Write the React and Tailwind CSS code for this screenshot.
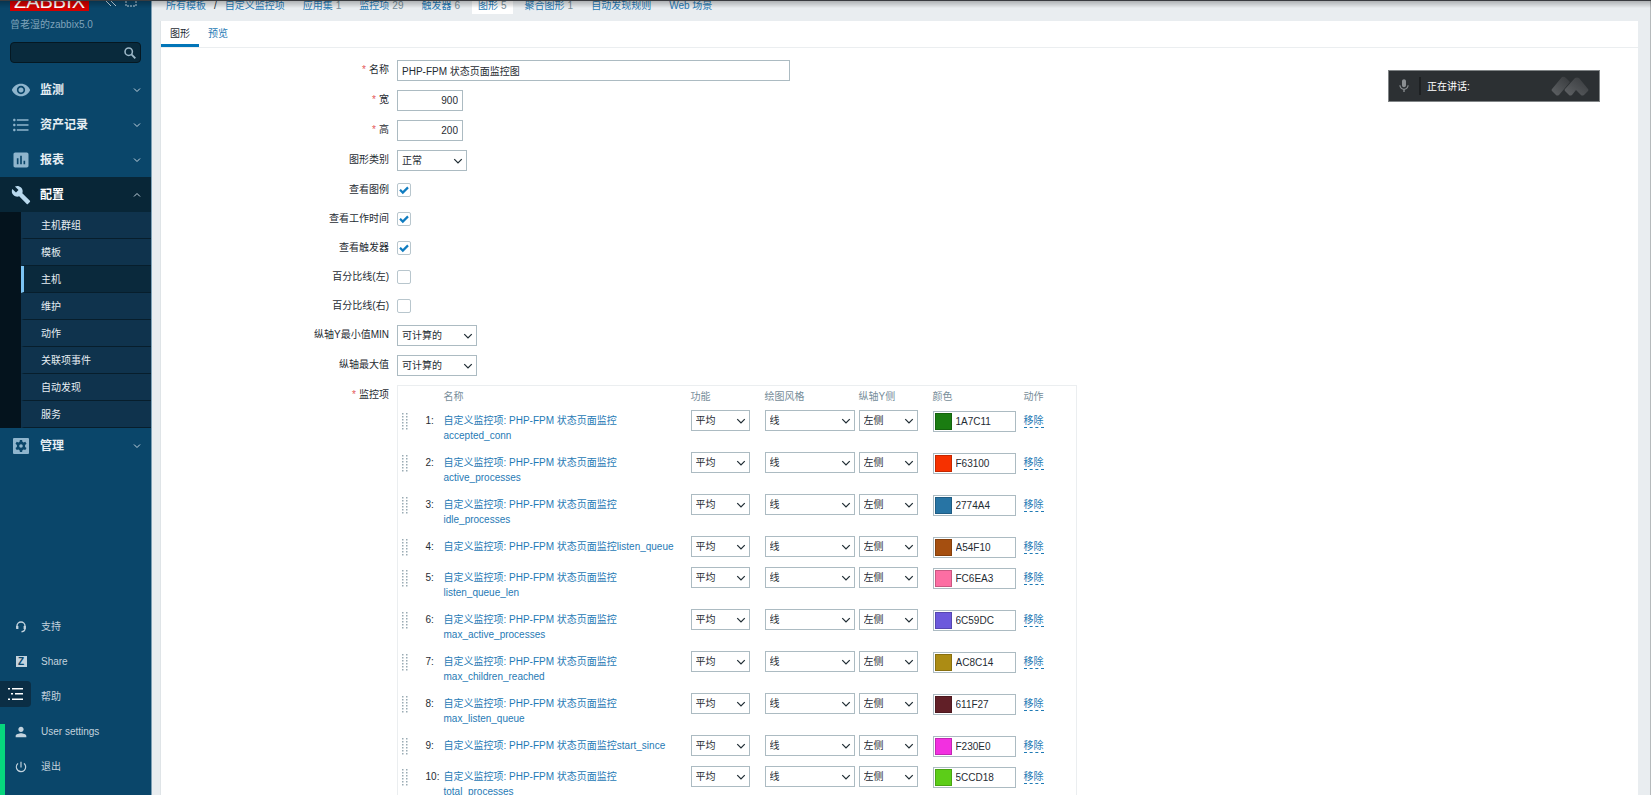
import React, { useState } from 'react';
import { MdVisibility, MdFormatListBulleted, MdAssessment, MdBuild, MdPerson, MdPowerSettingsNew, MdMic } from 'react-icons/md';

const menuTop = [
    { label: '监测', icon: MdVisibility },
    { label: '资产记录', icon: MdFormatListBulleted },
    { label: '报表', icon: MdAssessment },
];

const subMenu = ['主机群组', '模板', '主机', '维护', '动作', '关联项事件', '自动发现', '服务'];

const graphItems = [
    { name: 'accepted_conn', color: '1A7C11' },
    { name: 'active_processes', color: 'F63100' },
    { name: 'idle_processes', color: '2774A4' },
    { name: 'listen_queue', color: 'A54F10' },
    { name: 'listen_queue_len', color: 'FC6EA3' },
    { name: 'max_active_processes', color: '6C59DC' },
    { name: 'max_children_reached', color: 'AC8C14' },
    { name: 'max_listen_queue', color: '611F27' },
    { name: 'start_since', color: 'F230E0' },
    { name: 'total_processes', color: '5CCD18' },
];

const Chevron = ({ up, className }) => (
    <svg viewBox="0 0 8 8" className={className} fill="none" stroke="currentColor">
        <path d={up ? 'M1 5.500 4 2.500l3 3' : 'M1 2.500 4 5.500l3-3'} />
    </svg>
);

const GearIcon = ({ className }) => (
    <svg viewBox="0 0 16 16" className={className} fill="currentColor">
        <path
            fillRule="evenodd"
            d="M1 0h14a1 1 0 0 1 1 1v14a1 1 0 0 1-1 1H1a1 1 0 0 1-1-1V1a1 1 0 0 1 1-1zm5.9 2-.3 1.7-1.2.7-1.7-.6-1.2 2 1.4 1.2v1.9l-1.4 1.2 1.2 2 1.7-.6 1.2.7.3 1.8h2.2l.3-1.8 1.2-.7 1.7.6 1.2-2-1.4-1.2V7l1.4-1.2-1.2-2-1.7.6-1.2-.7L9.100 2zM8 6.200a1.800 1.800 0 1 1 0 3.600 1.800 1.800 0 0 1 0-3.600z"
        />
    </svg>
);

const HeadsetIcon = () => (
    <svg viewBox="0 0 12 12" className="size-3" fill="none" stroke="currentColor" strokeWidth="1.400">
        <path d="M2 7.500V5a4 4 0 0 1 8 0v2.500" />
        <path d="M2.300 5v3M9.700 5v3" strokeWidth="2.200" />
        <path d="M10 7.500c0 2-1 3-3.500 3.300" />
    </svg>
);

const ShareIcon = () => (
    <span className="flex size-[11px] items-center justify-center bg-[#c3d3de]">
        <span className="text-[10px] font-bold leading-none text-[#0a466a]">Z</span>
    </span>
);

const footerMenu = [
    { label: '支持', icon: <HeadsetIcon /> },
    { label: 'Share', icon: <ShareIcon /> },
    { label: '帮助', icon: null },
    { label: 'User settings', icon: <MdPerson className="size-4" /> },
    { label: '退出', icon: <MdPowerSettingsNew className="size-[14px]" /> },
];

const MenuRow = ({ label, icon: Icon, active }) => (
    <a
        href="#"
        className={`flex h-[35px] items-center pl-[11px] pr-2.5 text-xs font-bold ${active ? 'bg-[#082637] text-white' : 'text-[#e6eef3]'}`}
    >
        <span className={`mr-[9px] flex w-5 justify-center ${active ? 'text-[#b9d9ee]' : 'text-[#8fb5cd]'}`}>
            <Icon className={Icon === GearIcon ? 'size-4' : 'size-5'} />
        </span>
        <span className="flex-1">{label}</span>
        <Chevron up={active} className="size-2 text-[#c3d3de]" />
    </a>
);

const Sidebar = () => (
    <aside className="flex w-[152px] shrink-0 flex-col overflow-hidden border-r border-[#7ea0b5] bg-[#0a466a] text-[#c3d3de]">
        <div className="flex h-[11px] items-end px-2.5">
            <a href="#" className="w-[79px] bg-[#d40000] text-center text-xl leading-5 text-white">ZABBIX</a>
            <svg viewBox="0 0 12 12" className="mb-1 ml-4 size-3" fill="none" stroke="currentColor">
                <path d="M6 1 1 6l5 5M11 1 6 6l5 5" />
            </svg>
            <svg viewBox="0 0 12 12" className="mb-1 ml-2 size-3" fill="none" stroke="currentColor" strokeDasharray="2 1">
                <path d="M1 1h10v10H1z" />
            </svg>
        </div>
        <p className="mt-1.5 px-2.5 leading-[15px] text-[#7fa3ba]">曾老湿的zabbix5.0</p>
        <form className="mx-2.5 mt-2.5 flex h-[21px] items-center rounded-sm border border-[#051822] bg-[#092a3c] pr-1">
            <input type="text" aria-label="搜索" className="min-w-0 flex-1 bg-transparent px-1 outline-none" />
            <button type="button" aria-label="搜索" className="text-[#9db8c8]">
                <svg viewBox="0 0 14 14" className="size-3" fill="none" stroke="currentColor" strokeWidth="1.800">
                    <circle cx="5.500" cy="5.500" r="4.300" />
                    <path d="m8.700 8.700 4.500 4.500" strokeWidth="2.200" />
                </svg>
            </button>
        </form>
        <nav className="mt-[9px]">
            {menuTop.map((item) => (
                <MenuRow key={item.label} label={item.label} icon={item.icon} />
            ))}
            <MenuRow label="配置" icon={MdBuild} active />
            <ul className="bg-[#04131d] pl-[21px]">
                {subMenu.map((label) => (
                    <li key={label}>
                        <a
                            href="#"
                            className={`flex h-[27px] items-center border-b border-l-[3px] border-b-[#071e2c] pl-[17px] text-[#e6eef3] ${label === '主机' ? 'border-l-[#7cc4f4] bg-[#0a293c]' : 'border-l-[#0f334d] bg-[#0f334d]'}`}
                        >
                            {label}
                        </a>
                    </li>
                ))}
            </ul>
            <MenuRow label="管理" icon={GearIcon} />
        </nav>
        <nav className="mt-auto pb-[11px]">
            {footerMenu.map((item) => (
                <a href="#" key={item.label} className="flex h-[35px] items-center gap-2.5 pl-[11px]">
                    <span className="flex w-5 justify-center">{item.icon}</span>
                    {item.label}
                </a>
            ))}
        </nav>
    </aside>
);

const Crumb = ({ label, count, active }) => (
    <li className={`px-[6px] pb-[3px] pt-px ${active ? 'bg-white' : ''}`}>
        <a href="#" className="text-[#1f7ab5]">{label}</a>
        {count && <span className="ml-[3px] text-[#768d99]">{count}</span>}
    </li>
);

const Select = ({ className, options, ...rest }) => (
    <span className="inline-grid items-center align-top">
        <select
            className={`col-start-1 row-start-1 h-[21px] appearance-none border border-[#acbbc2] bg-white pl-1 outline-none ${className}`}
            {...rest}
        >
            {options.map((o) => (
                <option key={o}>{o}</option>
            ))}
        </select>
        <Chevron className="pointer-events-none col-start-1 row-start-1 mr-1 size-2.5 justify-self-end" />
    </span>
);

const Field = ({ id, label, required, height = 'min-h-[21px]', children }) => (
    <div className={`flex gap-2 ${height}`}>
        <label htmlFor={id} className="w-[228px] shrink-0 text-right leading-5">
            {required && <span className="mr-[3px] text-[#e45959]">*</span>}
            {label}
        </label>
        {children}
    </div>
);

const CheckField = ({ id, label, defaultChecked }) => {
    const [checked, setChecked] = useState(!!defaultChecked);
    return (
        <Field id={id} label={label} height="h-5">
            <span className="grid h-5 items-center">
                <input
                    id={id}
                    type="checkbox"
                    checked={checked}
                    onChange={(e) => setChecked(e.target.checked)}
                    className="col-start-1 row-start-1 size-[14px] appearance-none rounded-xs border border-[#b8c6cd] bg-white"
                />
                {checked && (
                    <svg viewBox="0 0 14 14" className="pointer-events-none col-start-1 row-start-1 size-[14px]" fill="none" stroke="#0f7cc0" strokeWidth="2.200">
                        <path d="m3 6.800 2.800 2.800L11 4.400" />
                    </svg>
                )}
            </span>
        </Field>
    );
};

const Grip = () => (
    <svg viewBox="0 0 6 17" className="mt-[3px] h-[17px] w-1.5" fill="#9aabb4">
        {[0, 3, 6, 9, 12, 15].map((y) => (
            <path key={y} d={`M0 ${y}h1.500v1.500H0zM4 ${y}h1.500v1.500H4z`} />
        ))}
    </svg>
);

const ItemRow = ({ index, item }) => (
    <tr className="align-top *:pb-1 *:pt-[5px]">
        <td className="pl-1"><Grip /></td>
        <td className="pt-2! leading-[15px]">{index}:</td>
        <td className="pt-2! leading-[15px]">
            <a href="#" className="block max-w-[236px] text-[#1f7ab5]">自定义监控项: PHP-FPM 状态页面监控{item.name}</a>
        </td>
        <td><Select aria-label="功能" className="w-[59px]" options={['平均', '最小', '最大', '全部']} /></td>
        <td><Select aria-label="绘图风格" className="w-[90px]" options={['线', '填充区域', '粗线', '点']} /></td>
        <td><Select aria-label="纵轴Y侧" className="w-[59px]" options={['左侧', '右侧']} /></td>
        <td>
            <div className="mt-px flex h-[21px] w-[83px] items-center border border-[#acbbc2] bg-white">
                <button
                    type="button"
                    aria-label="选择颜色"
                    className="ml-px size-[17px] shrink-0 border border-black/20"
                    style={{ backgroundColor: `#${item.color}` }}
                />
                <input type="text" aria-label="颜色" defaultValue={item.color} className="min-w-0 flex-1 pl-1 outline-none" />
            </div>
        </td>
        <td className="pt-[9px]!">
            <button type="button" className="block border-b border-dashed border-[#1f7ab5] leading-[13px] text-[#1f7ab5]">移除</button>
        </td>
    </tr>
);

const ItemsTable = () => (
    <table className="w-[680px] table-fixed border border-[#ebeef0] text-left">
        <colgroup>
            <col className="w-7" />
            <col className="w-[18px]" />
            <col className="w-[247px]" />
            <col className="w-[74px]" />
            <col className="w-[94px]" />
            <col className="w-[74px]" />
            <col className="w-[91px]" />
            <col />
        </colgroup>
        <thead>
            <tr className="text-[#768d99] *:pt-[3px] *:font-normal *:leading-4">
                <th />
                <th />
                <th>名称</th>
                <th>功能</th>
                <th>绘图风格</th>
                <th>纵轴Y侧</th>
                <th>颜色</th>
                <th>动作</th>
            </tr>
        </thead>
        <tbody>
            {graphItems.map((item, i) => (
                <ItemRow key={item.name} index={i + 1} item={item} />
            ))}
        </tbody>
    </table>
);

// Floating bar of the meeting client
const SpeakingBar = () => (
    <div className="fixed right-[51px] top-[70px] flex h-8 w-[212px] items-center border border-[#808486] bg-[#2c3033] text-white">
        <MdMic className="ml-[7px] size-4 text-[#8b8f92]" />
        <span className="ml-[7px] h-[18px] w-0.5 bg-[#1d2022]" />
        <span className="ml-1.5 flex-1">正在讲话:</span>
        <svg viewBox="0 0 38 20" className="mr-2.5 h-5 w-[38px]">
            <defs>
                <linearGradient id="peak" x1="0" y1="1" x2="1" y2="0">
                    <stop offset="0" stopColor="#606366" />
                    <stop offset="1" stopColor="#36393c" />
                </linearGradient>
            </defs>
            <path d="M1 13 11 1q2-1 4 1l4 4-11 13q-2 1-3 0l-4-4q-1-1 0-2z" fill="url(#peak)" />
            <path d="M14 13 24 2q2-1 4 0l9 11q1 1 0 2l-4 4q-2 1-3 0l-5-5-4 5q-2 1-3 0l-4-4q-1-1 0-2z" fill="url(#peak)" />
        </svg>
    </div>
);

export default function App() {
    return (
        <div className="flex h-screen overflow-hidden bg-[#e9edf0] font-['Liberation_Sans','Noto_Sans_CJK_SC',sans-serif] text-[10px] text-[#1f2c33]">
            <Sidebar />
            <main className="flex min-w-0 flex-1 flex-col border-r border-[#b5b9bb] pl-2 pr-3">
                <ul className="flex h-[21px] shrink-0 items-start gap-[6px] leading-[10px]">
                    <Crumb label="所有模板" />
                    <li aria-hidden="true" className="-mx-1 pt-px">/</li>
                    <Crumb label="自定义监控项" />
                    <Crumb label="应用集" count="1" />
                    <Crumb label="监控项" count="29" />
                    <Crumb label="触发器" count="6" />
                    <Crumb label="图形" count="5" active />
                    <Crumb label="聚合图形" count="1" />
                    <Crumb label="自动发现规则" />
                    <Crumb label="Web 场景" />
                </ul>
                <section className="min-h-0 flex-1 overflow-hidden border-l border-[#dfe4e7] bg-white">
                    <div className="flex h-[27px] border-b border-[#ebeef0]">
                        <button type="button" className="border-b-[3px] border-[#0275b8] px-[9px] pt-0.5">图形</button>
                        <button type="button" className="border-b-[3px] border-transparent px-[9px] pt-0.5 text-[#1f7ab5]">预览</button>
                    </div>
                    <form className="flex flex-col gap-[9px] pt-3">
                        <Field id="name" label="名称" required>
                            <input id="name" type="text" defaultValue="PHP-FPM 状态页面监控图" className="h-[21px] w-[393px] border border-[#acbbc2] px-1 outline-none" />
                        </Field>
                        <Field id="width" label="宽" required>
                            <input id="width" type="text" defaultValue="900" className="h-[21px] w-[66px] border border-[#acbbc2] px-1 text-right outline-none" />
                        </Field>
                        <Field id="height" label="高" required>
                            <input id="height" type="text" defaultValue="200" className="h-[21px] w-[66px] border border-[#acbbc2] px-1 text-right outline-none" />
                        </Field>
                        <Field id="graphtype" label="图形类别">
                            <Select id="graphtype" className="w-[70px]" options={['正常', '层积的', '饼图', '分裂的']} />
                        </Field>
                        <CheckField id="legend" label="查看图例" defaultChecked />
                        <CheckField id="worktime" label="查看工作时间" defaultChecked />
                        <CheckField id="triggers" label="查看触发器" defaultChecked />
                        <CheckField id="percent-left" label="百分比线(左)" />
                        <CheckField id="percent-right" label="百分比线(右)" />
                        <Field id="ymin" label="纵轴Y最小值MIN">
                            <Select id="ymin" className="w-20" options={['可计算的', '固定的', '监控项']} />
                        </Field>
                        <Field id="ymax" label="纵轴最大值">
                            <Select id="ymax" className="w-20" options={['可计算的', '固定的', '监控项']} />
                        </Field>
                        <Field label="监控项" required>
                            <ItemsTable />
                        </Field>
                    </form>
                </section>
            </main>

            <div className="pointer-events-none fixed inset-x-0 top-0 h-2 border-t border-[#3a3c40] bg-linear-to-b from-black/25 to-transparent" />
            <button type="button" aria-label="列表" className="fixed bottom-[88px] left-0 flex h-[26px] w-[31px] items-center rounded-r-sm bg-[#0b2e45] pl-2 text-white">
                <svg viewBox="0 0 16 14" className="h-[14px] w-4" fill="currentColor">
                    <path d="M0 1h2v1.500H0zM4 1h11v1.500H4zM3 6h2v1.500H3zM7 6h8v1.500H7zM0 11.500h2V13H0zM4 11.500h11V13H4z" />
                </svg>
            </button>
            <div className="fixed bottom-0 left-0 h-[71px] w-[5px] bg-[#07d67d]" />
            <SpeakingBar />
        </div>
    );
}
